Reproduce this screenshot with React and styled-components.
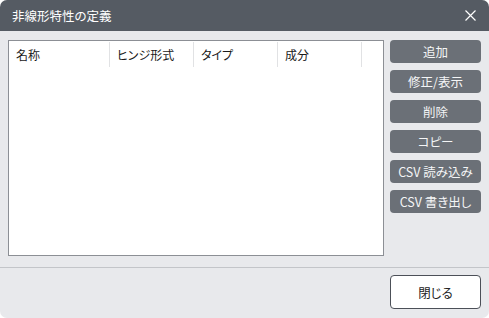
import React from 'react'
import styled, { createGlobalStyle } from 'styled-components'

const GlobalStyle = createGlobalStyle`
  html, body {
    margin: 0;
    padding: 0;
    background: #ffffff;
  }
  body {
    font-family: "Noto Sans CJK JP", "Noto Sans", sans-serif;
    font-feature-settings: "palt";
  }
`

const Dialog = styled.div`
  width: 489px;
  height: 318px;
  display: flex;
  flex-direction: column;
  background: #e8e9ec;
  border-radius: 7px;
  overflow: hidden;
`

const TitleBar = styled.div`
  height: 31px;
  flex: none;
  display: flex;
  align-items: center;
  justify-content: space-between;
  padding: 0 12px 0 12px;
  background: #555b63;
  color: #ffffff;
  font-size: 12.5px;
`

const CloseIcon = styled.svg`
  width: 11px;
  height: 11px;
  margin-right: 1px;
`

const Body = styled.div`
  display: flex;
  gap: 6px;
  padding: 9px 8px 0 8px;
  height: 227px;
  flex: none;
`

const ListBox = styled.div`
  width: 376px;
  height: 216px;
  box-sizing: border-box;
  background: #ffffff;
  border: 1px solid #8c8f95;
`

const HeaderRow = styled.div`
  display: flex;
  height: 25px;
  padding-top: 1px;
`

const HeaderCell = styled.div`
  width: ${p => p.$w}px;
  box-sizing: border-box;
  padding-left: 7px;
  border-right: 1px solid #e1e2e4;
  font-size: 12px;
  color: #1a1a1a;
  display: flex;
  align-items: center;
`

const ButtonColumn = styled.div`
  display: flex;
  flex-direction: column;
  gap: 7px;
`

const ActionButton = styled.button`
  width: 91px;
  height: 23px;
  border: none;
  border-radius: 4px;
  background: #6b7077;
  color: #f4f5f6;
  font-family: inherit;
  font-feature-settings: inherit;
  font-size: 12.5px;
  padding: 0;
  display: flex;
  align-items: center;
  justify-content: center;
`

const Footer = styled.div`
  flex: 1;
  border-top: 1px solid #c3c5c9;
  display: flex;
  justify-content: flex-end;
  padding: 7px 8px 0 0;
`

const CloseButton = styled.button`
  width: 91px;
  height: 34px;
  box-sizing: border-box;
  background: #ffffff;
  border: 1px solid #4c5058;
  border-radius: 4px;
  color: #222;
  font-family: inherit;
  font-feature-settings: inherit;
  font-size: 12.5px;
  padding: 0;
`

const columns = [
  { label: '名称', w: 101 },
  { label: 'ヒンジ形式', w: 84 },
  { label: 'タイプ', w: 84 },
  { label: '成分', w: 84 },
]

const actions = ['追加', '修正/表示', '削除', 'コピー', 'CSV 読み込み', 'CSV 書き出し']

export default function App() {
  return (
    <>
      <GlobalStyle />
      <Dialog>
        <TitleBar>
          <span>非線形特性の定義</span>
          <CloseIcon viewBox="0 0 11 11">
            <path d="M0.5 0.5 L10.5 10.5 M10.5 0.5 L0.5 10.5" stroke="#fff" strokeWidth="1.2" fill="none" />
          </CloseIcon>
        </TitleBar>
        <Body>
          <ListBox>
            <HeaderRow>
              {columns.map(c => (
                <HeaderCell key={c.label} $w={c.w}>{c.label}</HeaderCell>
              ))}
            </HeaderRow>
          </ListBox>
          <ButtonColumn>
            {actions.map(a => (
              <ActionButton key={a}>{a}</ActionButton>
            ))}
          </ButtonColumn>
        </Body>
        <Footer>
          <CloseButton>閉じる</CloseButton>
        </Footer>
      </Dialog>
    </>
  )
}
